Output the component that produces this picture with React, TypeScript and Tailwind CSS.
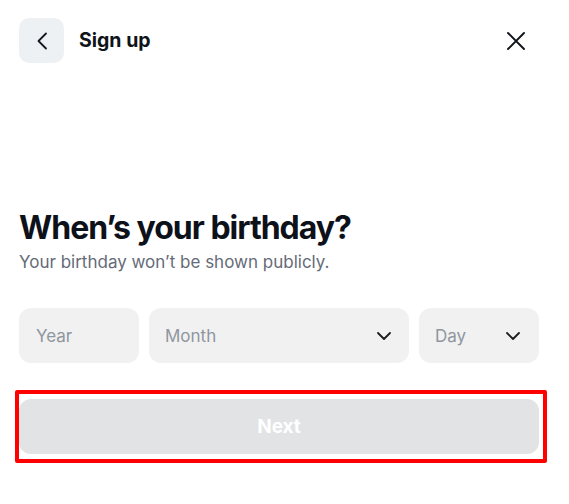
import React from "react";

function Chevron({ className }: { className?: string }) {
  return (
    <svg className={className} width="14" height="8" viewBox="0 0 14 8" fill="none">
      <path d="M1 1l6 6 6-6" stroke="#1a1d21" strokeWidth="1.8" strokeLinecap="round" strokeLinejoin="round" />
    </svg>
  );
}

export default function App() {
  return (
    <div className="relative w-[569px] h-[504px] bg-white font-['Inter',sans-serif] overflow-hidden">
      <div className="flex flex-col pl-[19px] pr-[30px]">
        <div className="mt-[18px] h-[45px] flex items-center justify-between">
          <div className="flex items-center">
            <button className="w-[45px] h-[45px] rounded-[10px] bg-[#eef1f4] flex items-center justify-center">
              <svg width="12" height="18" viewBox="0 0 12 18" fill="none">
                <path d="M10 1.5L2.5 9l7.5 7.5" stroke="#14171c" strokeWidth="1.8" strokeLinecap="round" strokeLinejoin="round" />
              </svg>
            </button>
            <span className="ml-[15px] text-[19.5px] font-bold text-[#0f1419] leading-none">Sign up</span>
          </div>
          <button className="mr-[13px] w-[20px] h-[20px] flex items-center justify-center">
            <svg width="20" height="20" viewBox="0 0 20 20" fill="none">
              <path d="M2 2l16 16M18 2L2 18" stroke="#0f1419" strokeWidth="1.9" strokeLinecap="round" />
            </svg>
          </button>
        </div>

        <h1 className="mt-[145px] text-[32px] leading-[40px] font-bold text-[#0d111a] tracking-[-1px]">
          When’s your birthday?
        </h1>
        <p className="mt-[2px] text-[17px] leading-[24px] text-[#656b78]">
          Your birthday won’t be shown publicly.
        </p>

        <div className="mt-[34px] h-[55px] flex gap-[10px]">
          <div className="w-[120px] h-full rounded-[12px] bg-[#f1f1f1] flex items-center pl-[17px] pt-[2px] text-[17px] text-[#8e96a0]">
            Year
          </div>
          <div className="flex-1 h-full rounded-[12px] bg-[#f1f1f1] flex items-center justify-between pl-[16px] pr-[18px] text-[17px] text-[#8e96a0]">
            <span className="pt-[2px]">Month</span>
            <Chevron />
          </div>
          <div className="w-[120px] h-full rounded-[12px] bg-[#f1f1f1] flex items-center justify-between pl-[16px] pr-[19px] text-[17px] text-[#8e96a0]">
            <span className="pt-[2px]">Day</span>
            <Chevron />
          </div>
        </div>

        <button className="mt-[36px] h-[55px] w-full rounded-[12px] bg-[#e1e3e5] text-white text-[19px] font-bold flex items-center justify-center pt-[2px]">
          Next
        </button>
      </div>

      <div className="absolute left-[15px] top-[390px] w-[532px] h-[73px] border-4 border-[#ff0000] rounded-[2px] pointer-events-none" />
    </div>
  );
}
